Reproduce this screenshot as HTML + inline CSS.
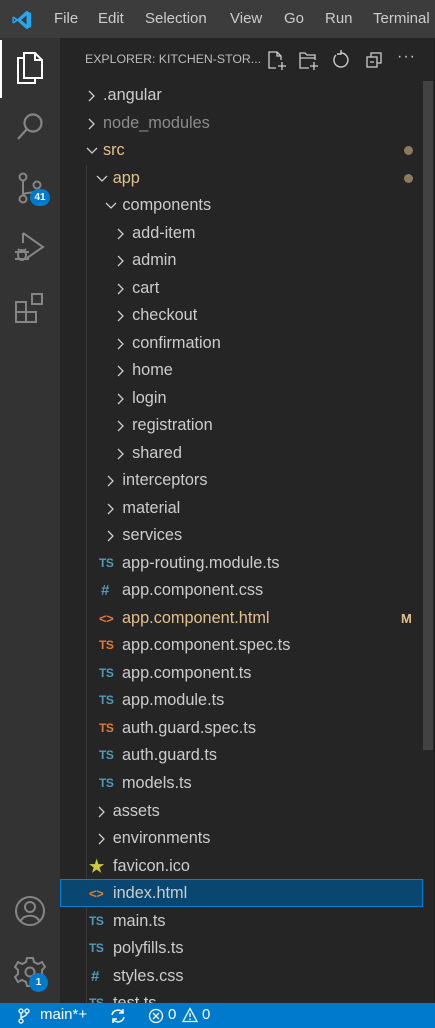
<!DOCTYPE html>
<html><head><meta charset="utf-8"><style>
*{margin:0;padding:0;box-sizing:border-box}
body{width:435px;height:1028px;background:#252526;position:relative;overflow:hidden;font-family:"Segoe UI","Liberation Sans",sans-serif;font-size:16.3px;color:#ccc}
#title{position:absolute;left:0;top:0;width:435px;height:38px;background:#3c3c3c;color:#ccc;font-size:15px}
#title span{position:absolute;top:10px}
#act{position:absolute;left:0;top:38px;width:60px;height:965px;background:#333}
#side{position:absolute;left:60px;top:38px;width:375px;height:965px;background:#252526}
#status{position:absolute;left:0;top:1003px;width:435px;height:25px;background:#007acc;color:#fff;font-size:15px}
.row{position:absolute;left:60px;width:363px;height:27.5px;line-height:27.5px;white-space:nowrap}
.row .t{position:absolute;top:1px}
.chev{position:absolute;top:1px;width:16px;height:27.5px}
.ic{position:absolute;top:1px;font-weight:bold;font-size:12px;letter-spacing:-0.5px}
.ts{color:#519aba}.tso{color:#e37933}
.badge{position:absolute;background:#007acc;color:#fff;border-radius:10px;font-size:10px;font-weight:bold;text-align:center;height:17px;line-height:17px}
</style></head><body>
<div id="title">
<svg style="position:absolute;left:11px;top:9px" width="22" height="22" viewBox="0 0 24 24"><path d="M17 2 L22 4.5 V19.5 L17 22 L7 13 L3 16 L1.5 15 V9 L3 8 L7 11 L17 2 Z M17 7 L11 12 L17 17 Z M3 10 V14 L5 12 Z" fill="#23a9f2" fill-rule="evenodd"/></svg>
<span style="left:54px">File</span><span style="left:98px">Edit</span><span style="left:145px">Selection</span><span style="left:230px">View</span><span style="left:284px">Go</span><span style="left:325px">Run</span><span style="left:373px">Terminal</span>
</div>
<div id="act">
<div style="position:absolute;left:0;top:2px;width:2px;height:58px;background:#fff"></div>
<svg style="position:absolute;left:15px;top:13px" width="30" height="34" viewBox="0 0 30 34" fill="none" stroke="#fff" stroke-width="2"><path d="M9 7 H3 V32 H20 V27"/><path d="M9 2 H20 L27 9 V27 H9 Z"/><path d="M20 2 V9 H27"/></svg>
<svg style="position:absolute;left:15px;top:73px" width="30" height="32" viewBox="0 0 30 32" fill="none" stroke="#858585" stroke-width="2.2"><circle cx="18" cy="12" r="8.5"/><path d="M12 18 L3 28"/></svg>
<svg style="position:absolute;left:15px;top:133px" width="30" height="34" viewBox="0 0 30 34" fill="none" stroke="#858585" stroke-width="2"><circle cx="8" cy="6" r="3.5"/><circle cx="8" cy="28" r="3.5"/><circle cx="22" cy="14" r="3.5"/><path d="M8 9.5 V24.5"/><path d="M22 17.5 C22 24 8 20 8 24.5"/></svg>
<div class="badge" style="left:30px;top:151px;width:20px">41</div>
<svg style="position:absolute;left:13px;top:192px" width="34" height="34" viewBox="0 0 34 34" fill="none" stroke="#858585" stroke-width="2"><path d="M10 3 L30 17 L14 28"/><path d="M10 3 V13"/><ellipse cx="9" cy="25" rx="4" ry="5"/><path d="M2 22 H16 M2 29 H16 M5 19 L7 21 M13 19 L11 21"/></svg>
<svg style="position:absolute;left:14px;top:253px" width="32" height="34" viewBox="0 0 32 34" fill="none" stroke="#858585" stroke-width="2"><rect x="2" y="11" width="10" height="10"/><rect x="2" y="21" width="10" height="10"/><rect x="12" y="21" width="10" height="10"/><rect x="18" y="3" width="10" height="10"/></svg>
<svg style="position:absolute;left:14px;top:857px" width="32" height="32" viewBox="0 0 32 32" fill="none" stroke="#858585" stroke-width="2"><circle cx="16" cy="16" r="14"/><circle cx="16" cy="12" r="5"/><path d="M7 26 C9 19 23 19 25 26"/></svg>
<svg style="position:absolute;left:14px;top:918px" width="32" height="32" viewBox="0 0 32 32" fill="none" stroke="#858585" stroke-width="2"><path d="M13 2 H19 L20 6 L24 8 L28 6 L31 11 L28 14 V18 L31 21 L28 26 L24 24 L20 26 L19 30 H13 L12 26 L8 24 L4 26 L1 21 L4 18 V14 L1 11 L4 6 L8 8 L12 6 Z"/><circle cx="16" cy="16" r="4.5"/></svg>
<div class="badge" style="left:29px;top:935px;width:19px;height:19px;line-height:19px;border-radius:50%">1</div>
</div>
<div id="side">
<div style="position:absolute;left:25px;top:14px;font-size:12.3px;color:#bbb">EXPLORER: KITCHEN-STOR...</div>
<svg style="position:absolute;left:207px;top:12px" width="20" height="22" viewBox="0 0 20 22" fill="none" stroke="#ccc" stroke-width="1.3"><path d="M9 18 H2 V2 H10 L14 6 V10 M10 2 V6 H14"/><path d="M15 12 V20 M11 16 H19"/></svg>
<svg style="position:absolute;left:238px;top:12px" width="22" height="22" viewBox="0 0 22 22" fill="none" stroke="#ccc" stroke-width="1.3"><path d="M11 18 H2 V3 H7 L9 5 H17 V10 M2 8 H17"/><path d="M16 12 V20 M12 16 H20"/></svg>
<svg style="position:absolute;left:271px;top:12px" width="20" height="20" viewBox="0 0 20 20" fill="none" stroke="#ccc" stroke-width="1.4"><path d="M5 5 A7 7 0 1 0 10 3"/><path d="M10 0 V4 H6" /></svg>
<svg style="position:absolute;left:305px;top:13px" width="18" height="18" viewBox="0 0 18 18" fill="none" stroke="#ccc" stroke-width="1.3"><rect x="2" y="6" width="10" height="10"/><path d="M6 6 V2 H16 V12 H12 M5 11 H9"/></svg>
<div style="position:absolute;left:337px;top:10px;font-size:16px;color:#ccc;letter-spacing:1px">···</div>
<div style="position:absolute;left:363px;top:43px;width:10px;height:669px;background:#424242"></div>
<div style="position:absolute;left:26px;top:127px;width:1px;height:840px;background:#3a3a3a"></div>
<div style="position:absolute;left:374px;top:0;width:1px;height:965px;background:#1e1e1e"></div>
</div>
<div id="rows"></div>
<script>
var R=[[0,'c','.angular',''],[0,'c','node_modules','#8c8c8c'],[0,'o','src','#e2c08d','dot'],[1,'o','app','#e2c08d','dot'],[2,'o','components',''],
[3,'c','add-item'],[3,'c','admin'],[3,'c','cart'],[3,'c','checkout'],[3,'c','confirmation'],[3,'c','home'],[3,'c','login'],[3,'c','registration'],[3,'c','shared'],
[2,'c','interceptors'],[2,'c','material'],[2,'c','services'],
[2,'ts','app-routing.module.ts'],[2,'css','app.component.css'],[2,'html','app.component.html','#e2c08d','M'],[2,'tso','app.component.spec.ts'],[2,'ts','app.component.ts'],[2,'ts','app.module.ts'],[2,'tso','auth.guard.spec.ts'],[2,'ts','auth.guard.ts'],[2,'ts','models.ts'],
[1,'c','assets'],[1,'c','environments'],[1,'star','favicon.ico'],[1,'html','index.html','','sel'],[1,'ts','main.ts'],[1,'ts','polyfills.ts'],[1,'css','styles.css'],[1,'ts','test.ts']];
var h='';
R.forEach(function(r,i){
 var top=81+27.52*i, lvl=r[0], k=r[1], col=r[3]||'#cccccc';
 var st='top:'+top+'px;color:'+col+';';
 if(r[4]=='sel') st+='background:#094771;outline:1px solid #007fd4;outline-offset:-1px;';
 var x=lvl*9.7;
 var s='<div class="row" style="'+st+'">';
 if(k=='c'||k=='o'){
  var cx=24+x;
  s+='<svg class="chev" style="left:'+cx+'px" viewBox="0 0 16 27.5"><path d="'+(k=='c'?'M5 9 L10 14 L5 19':'M3 11 L8 16 L13 11')+'" fill="none" stroke="#ccc" stroke-width="1.3"/></svg>';
  s+='<span class="t" style="left:'+(43+x)+'px">'+r[2]+'</span>';
 } else {
  var ix,tx;
  if(lvl==2){ix=39;tx=62;} if(lvl==1){ix=29;tx=53;}
  var g='';
  if(k=='ts') g='<span class="ic ts" style="left:'+ix+'px">TS</span>';
  if(k=='tso') g='<span class="ic tso" style="left:'+ix+'px">TS</span>';
  if(k=='css') g='<span class="ic ts" style="left:'+(ix+2)+'px;font-size:15px">#</span>';
  if(k=='html') g='<span class="ic" style="left:'+ix+'px;color:#e37933;font-size:13px">&lt;&gt;</span>';
  if(k=='star') g='<span class="ic" style="left:'+ix+'px;color:#cbcb41;font-size:17px">★</span>';
  s+=g+'<span class="t" style="left:'+tx+'px">'+r[2]+'</span>';
 }
 if(r[4]=='dot') s+='<span style="position:absolute;left:344px;top:10px;width:9px;height:9px;border-radius:50%;background:#8d7b5e"></span>';
 if(r[4]=='M') s+='<span style="position:absolute;left:341px;top:1px;font-weight:bold;font-size:13px;color:#e2c08d">M</span>';
 h+=s+'</div>';
});
document.getElementById('rows').innerHTML=h;
</script>
<div id="status">
<svg style="position:absolute;left:18px;top:5px" width="12" height="16" viewBox="0 0 12 16" fill="none" stroke="#fff" stroke-width="1.3"><circle cx="3" cy="3" r="2"/><circle cx="9" cy="3" r="2"/><circle cx="3" cy="13" r="2"/><path d="M3 5 V11 M9 5 C9 9 3 8 3 11"/></svg>
<span style="position:absolute;left:40px;top:3px">main*+</span>
<svg style="position:absolute;left:110px;top:5px" width="16" height="16" viewBox="0 0 16 16" fill="none" stroke="#fff" stroke-width="1.5"><path d="M2 7 A6 6 0 0 1 13 5 M14 9 A6 6 0 0 1 3 11"/><path d="M13 1 V5 H9 M3 15 V11 H7"/></svg>
<svg style="position:absolute;left:148px;top:5px" width="16" height="16" viewBox="0 0 16 16" fill="none" stroke="#fff" stroke-width="1.3"><circle cx="8" cy="8" r="6.5"/><path d="M5 5 L11 11 M11 5 L5 11"/></svg>
<span style="position:absolute;left:168px;top:3px">0</span>
<svg style="position:absolute;left:182px;top:4px" width="16" height="16" viewBox="0 0 16 16" fill="none" stroke="#fff" stroke-width="1.3"><path d="M8 1.5 L15 14.5 H1 Z M8 6 V10 M8 11.5 V13"/></svg>
<span style="position:absolute;left:202px;top:3px">0</span>
</div>
</body></html>
